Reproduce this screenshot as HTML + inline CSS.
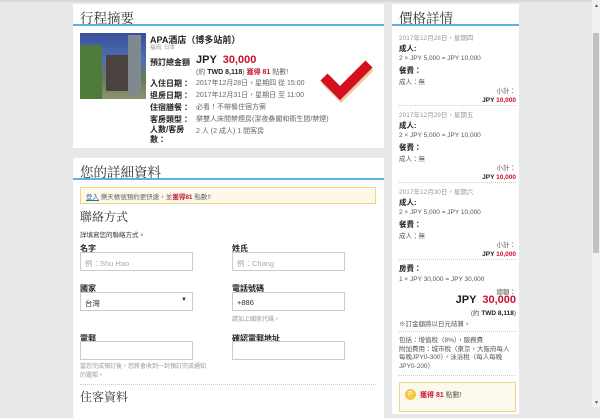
<!DOCTYPE html>
<html><head><meta charset="utf-8"><style>
*{margin:0;padding:0;box-sizing:border-box}
body{width:600px;height:407px;overflow:hidden;background:#e8e8e8;font-family:"Liberation Sans","Noto Sans CJK TC",sans-serif;color:#333;position:relative}
.a{position:absolute;white-space:nowrap}
.p{position:absolute;background:#fff}
.t{font-family:"Liberation Serif","Noto Serif CJK SC",serif;font-size:13.5px;color:#333}
.bl{position:absolute;height:2px;background:#5ab4dc}
.s{font-size:7px;color:#666}
.b{font-size:8px;font-weight:bold;color:#222}
.in{position:absolute;border:1px solid #ccc;background:#fff;height:19px;font-size:7.5px;color:#aaa;padding:5px 4px}
.red{color:#c8102e}
.dot{position:absolute;border-top:1px dotted #ccc;height:0}
</style></head><body>
<div class="a" style="left:0;top:0;width:592px;height:2px;background:#d8d8d8"></div>
<!-- panel 1 -->
<div class="p" style="left:73px;top:4px;width:311px;height:144px"></div>
<div class="a t" style="left:80px;top:7px">行程摘要</div>
<div class="bl" style="left:73px;top:24px;width:311px"></div>
<div class="a" style="left:80px;top:33px;width:66px;height:66px;background:linear-gradient(180deg,#3a4f9a 0%,#4d6fb5 40%,#6b7a5a 70%,#8a9470 100%)"></div>
<div class="a" style="left:80px;top:45px;width:22px;height:54px;background:#4e7a3a"></div>
<div class="a" style="left:106px;top:55px;width:22px;height:36px;background:#4a4240"></div>
<div class="a" style="left:128px;top:35px;width:13px;height:60px;background:#7f8a90"></div>
<div class="a" style="left:150px;top:33px;font-size:9px;color:#222;font-weight:bold">APA酒店（博多站前）</div>
<div class="a" style="left:150px;top:43px;font-size:5.5px;color:#999">福岡, 日本</div>
<div class="a b" style="left:150px;top:57px">預訂總金額</div>
<div class="a" style="left:196px;top:54px;font-size:11px;font-weight:bold;color:#222">JPY <span class="red">&nbsp;30,000</span></div>
<div class="a s" style="left:196px;top:67px">(約 <b style="color:#222">TWD 8,118</b>) <b class="red">獲得 81</b> 點數!</div>
<div class="a b" style="left:150px;top:78px">入住日期：</div><div class="a s" style="left:196px;top:78px">2017年12月28日，星期四 從 15:00</div>
<div class="a b" style="left:150px;top:90px">退房日期：</div><div class="a s" style="left:196px;top:90px">2017年12月31日，星期日 至 11:00</div>
<div class="a b" style="left:150px;top:102px">住宿膳餐：</div><div class="a s" style="left:196px;top:102px">必看！不帶餐住宿方案</div>
<div class="a b" style="left:150px;top:114px">客房類型：</div><div class="a s" style="left:196px;top:114px">樂雙人床間禁煙房(潔夜桑閣和衛生間/禁煙)</div>
<div class="a b" style="left:150px;top:125px;line-height:10px">人數/客房<br>數：</div><div class="a s" style="left:196px;top:126px">2 人 (2 成人) 1 間客房</div>
<svg class="a" style="left:318px;top:58px" width="56" height="46"><polyline points="6,20 22,36 51,7" fill="none" stroke="#f0c8a0" stroke-width="10" transform="translate(1,2)"/><polyline points="6,19 22,35 51,6" fill="none" stroke="#d40f1f" stroke-width="10"/></svg>
<!-- panel 2 -->
<div class="p" style="left:73px;top:158px;width:311px;height:260px"></div>
<div class="a t" style="left:80px;top:161px">您的詳細資料</div>
<div class="bl" style="left:73px;top:178px;width:311px"></div>
<div class="a" style="left:80px;top:187px;width:296px;height:17px;background:#fdf8e8;border:1px solid #e8d88a"></div>
<div class="a" style="left:86px;top:191px;font-size:6.5px;color:#666"><u style="color:#2a6ebb">登入</u> 樂天帳號預約更快速，並<b class="red">獲得81</b> 點數!!</div>
<div class="a t" style="left:80px;top:208px;font-size:12px">聯絡方式</div>
<div class="a" style="left:80px;top:229px;font-size:6.5px;color:#333">詳填寫您的聯絡方式。</div>
<div class="a b" style="left:80px;top:243px">名字</div><div class="a b" style="left:232px;top:243px">姓氏</div>
<div class="in" style="left:80px;top:252px;width:113px">例：Shu Hao</div>
<div class="in" style="left:232px;top:252px;width:113px">例：Chang</div>
<div class="a b" style="left:80px;top:283px">國家</div><div class="a b" style="left:232px;top:283px">電話號碼</div>
<div class="in" style="left:80px;top:292px;width:113px;color:#333">台灣<span style="position:absolute;right:5px;top:4px;font-size:6px">▼</span></div>
<div class="in" style="left:232px;top:292px;width:113px;color:#333">+886</div>
<div class="a" style="left:232px;top:314px;font-size:6px;color:#999">請加上國家代碼。</div>
<div class="a b" style="left:80px;top:333px">電郵</div><div class="a b" style="left:232px;top:333px">確認電郵地址</div>
<div class="in" style="left:80px;top:341px;width:113px"></div>
<div class="in" style="left:232px;top:341px;width:113px"></div>
<div class="a" style="left:80px;top:363px;font-size:6px;color:#999;line-height:9px">當您完成預訂後，您將會收到一封預訂完成通知<br>的電郵。</div>
<div class="dot" style="left:80px;top:384px;width:296px"></div>
<div class="a t" style="left:80px;top:388px;font-size:12px">住客資料</div>
<!-- right panel -->
<div class="p" style="left:392px;top:4px;width:127px;height:410px"></div>
<div class="a t" style="left:399px;top:7px">價格詳情</div>
<div class="bl" style="left:392px;top:24px;width:127px"></div>
<div class="a" style="left:399px;top:34px;font-size:6.5px;color:#999;line-height:9.5px">
2017年12月28日，星期四<br><b style="color:#222;font-size:7.5px">成人:</b><br><span style="color:#555">2 × JPY 5,000 = JPY 10,000</span><br><b style="color:#222;font-size:7.5px;line-height:14px">餐費：</b><br><span style="color:#555">成人：無</span></div>
<div class="a" style="left:460px;top:87px;width:56px;text-align:right;font-size:6.5px;color:#555;line-height:9px">小計：<br><b style="color:#222">JPY <span class="red">10,000</span></b></div>
<div class="dot" style="left:399px;top:105px;width:117px"></div>
<div class="a" style="left:399px;top:111px;font-size:6.5px;color:#999;line-height:9.5px">
2017年12月29日，星期五<br><b style="color:#222;font-size:7.5px">成人:</b><br><span style="color:#555">2 × JPY 5,000 = JPY 10,000</span><br><b style="color:#222;font-size:7.5px;line-height:14px">餐費：</b><br><span style="color:#555">成人：無</span></div>
<div class="a" style="left:460px;top:164px;width:56px;text-align:right;font-size:6.5px;color:#555;line-height:9px">小計：<br><b style="color:#222">JPY <span class="red">10,000</span></b></div>
<div class="dot" style="left:399px;top:182px;width:117px"></div>
<div class="a" style="left:399px;top:188px;font-size:6.5px;color:#999;line-height:9.5px">
2017年12月30日，星期六<br><b style="color:#222;font-size:7.5px">成人:</b><br><span style="color:#555">2 × JPY 5,000 = JPY 10,000</span><br><b style="color:#222;font-size:7.5px;line-height:14px">餐費：</b><br><span style="color:#555">成人：無</span></div>
<div class="a" style="left:460px;top:241px;width:56px;text-align:right;font-size:6.5px;color:#555;line-height:9px">小計：<br><b style="color:#222">JPY <span class="red">10,000</span></b></div>
<div class="dot" style="left:399px;top:259px;width:117px"></div>
<div class="a" style="left:399px;top:264px;font-size:6.5px;color:#555;line-height:10px"><b style="color:#222;font-size:7.5px">房費：</b><br>1 × JPY 30,000 = JPY 30,000</div>
<div class="a" style="left:460px;top:286px;width:56px;text-align:right;font-size:6.5px;color:#555">總額：</div>
<div class="a" style="left:430px;top:294px;width:86px;text-align:right;font-size:11px;font-weight:bold;color:#222">JPY <span class="red">&nbsp;30,000</span></div>
<div class="a" style="left:430px;top:307px;width:86px;text-align:right;font-size:6.5px;color:#555">(約 <b style="color:#222">TWD 8,118</b>)</div>
<div class="a" style="left:399px;top:318px;font-size:6.5px;color:#555">※訂金額將以日元結算。</div>
<div class="dot" style="left:399px;top:331px;width:117px"></div>
<div class="a" style="left:399px;top:337px;font-size:6.5px;color:#555;line-height:8.5px">包括：增值稅（8%），服務費<br>附加費用：城市稅（東京，大阪府每人<br>每晚JPY0-300），泳浴稅（每人每晚<br>JPY0-200）</div>
<div class="dot" style="left:399px;top:375px;width:117px"></div>
<div class="a" style="left:399px;top:382px;width:117px;height:30px;background:#fdf9ec;border:1px solid #e8d88a"></div>
<div class="a" style="left:405px;top:389px;width:11px;height:11px;border-radius:50%;background:#f5c842;font-size:7px;color:#fff;text-align:center;line-height:11px">P</div>
<div class="a" style="left:420px;top:390px;font-size:7px;color:#555"><b class="red">獲得 81</b> 點數!</div>
<!-- scrollbar -->
<div class="a" style="left:592px;top:0;width:8px;height:407px;background:#f1f1f1"></div>
<div class="a" style="left:593px;top:33px;width:6px;height:220px;background:#c1c1c1"></div>
<div class="a" style="left:594px;top:3px;font-size:5px;color:#555">▲</div>
<div class="a" style="left:594px;top:400px;font-size:5px;color:#555">▼</div>
</body></html>
